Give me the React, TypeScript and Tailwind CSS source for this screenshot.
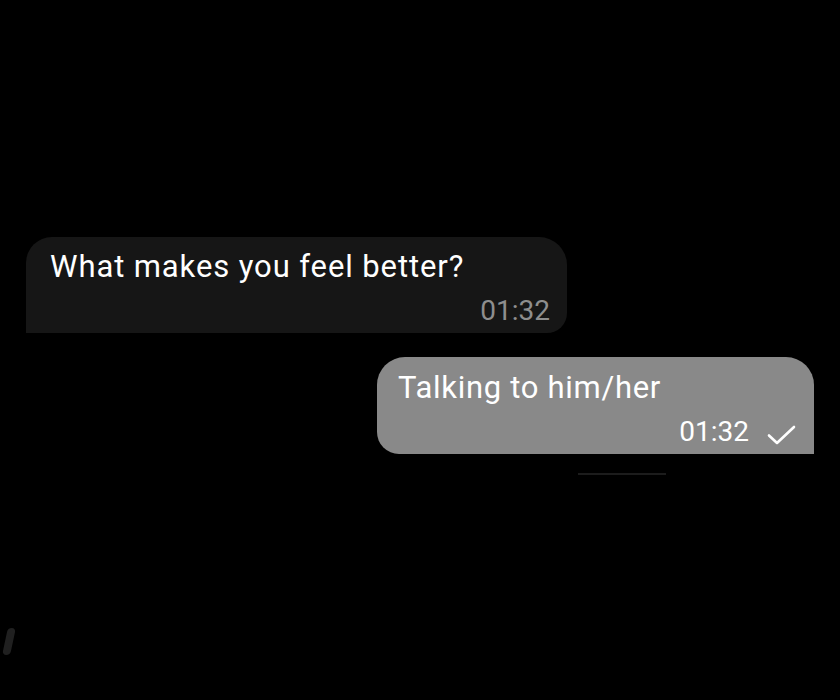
import React from "react";

function Check() {
  return (
    <svg width="30" height="20" viewBox="0 0 30 20" fill="none" className="ml-[18px] mt-[6px]">
      <path d="M2 10.5 L10 18 L27 2" stroke="#ffffff" strokeWidth="2.6" strokeLinecap="round" strokeLinejoin="round" />
    </svg>
  );
}

export default function App() {
  return (
    <div
      className="relative w-[840px] h-[700px] bg-black overflow-hidden flex flex-col"
      style={{ fontFamily: "Roboto, 'Noto Sans', sans-serif" }}
    >
      <div className="pt-[237px] pl-[26px]">
        <div className="w-[541px] h-[96px] bg-[#161616] rounded-tl-[26px] rounded-tr-[28px] rounded-br-[20px] flex flex-col pl-[24px] pr-[17px] pt-[12px]">
          <div className="text-[31px] leading-[36px] text-white tracking-[0.9px] whitespace-nowrap">What makes you feel better?</div>
          <div className="self-end text-[28px] leading-[32px] text-[#8e8e8e] mt-[10px]">01:32</div>
        </div>
      </div>
      <div className="pt-[24px] pr-[26px] flex justify-end">
        <div className="w-[437px] h-[97px] bg-[#898989] rounded-tl-[28px] rounded-tr-[28px] rounded-bl-[22px] flex flex-col pl-[21px] pr-[17px] pt-[13px]">
          <div className="text-[31px] leading-[36px] text-white tracking-[0.7px] whitespace-nowrap">Talking to him/her</div>
          <div className="self-end flex items-center mt-[10px]">
            <span className="text-[28px] leading-[32px] text-white">01:32</span>
            <Check />
          </div>
        </div>
      </div>
      <div className="pt-[19px] pl-[578px]">
        <div className="w-[88px] h-[2px] bg-[#1c1c1c]" />
      </div>
      <div className="absolute left-[5px] top-[628px] w-[8px] h-[27px] bg-[#202020] rounded-sm skew-x-[-12deg]" />
    </div>
  );
}
